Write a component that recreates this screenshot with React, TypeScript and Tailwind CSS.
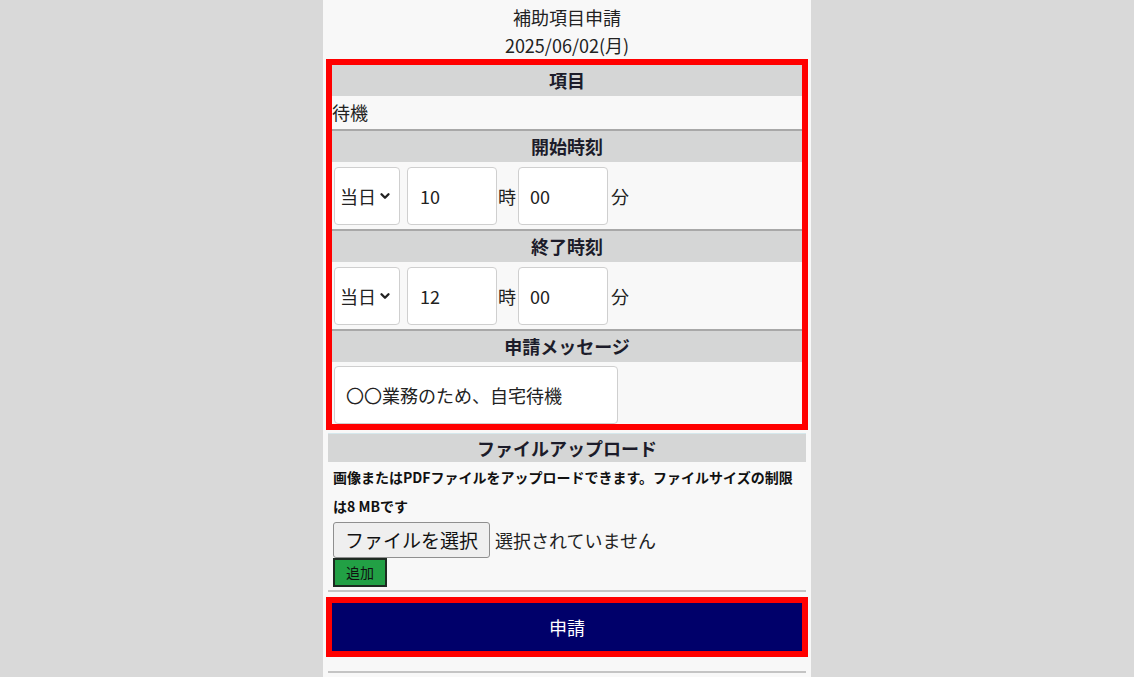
import { ChevronDown } from "lucide-react"

const font = { fontFamily: '"Noto Sans CJK JP", "Noto Sans", sans-serif' }

function SectionHeader({ label }: { label: string }) {
  return (
    <div className="h-[33px] bg-[#d5d6d6] border-t-2 border-[#a8a8a8] flex items-center justify-center text-[18px] font-bold text-[#1c1c2a]">
      {label}
    </div>
  )
}

function TimeRow({ hour, minute }: { hour: string; minute: string }) {
  return (
    <div className="flex items-center h-[67px] pl-[2px] pt-[1px] text-[18px] text-[#222]">
      <div className="w-[66px] h-[58px] border border-[#cfcfcf] rounded-[4px] bg-white flex items-center pl-[5px] gap-[2px]">
        <span>当日</span>
        <ChevronDown className="w-[14px] h-[14px]" strokeWidth={4} />
      </div>
      <div className="ml-[7px] w-[90px] h-[58px] border border-[#cfcfcf] rounded-[4px] bg-white flex items-center pl-[12px]">
        {hour}
      </div>
      <span className="ml-[1px] w-[20px]">時</span>
      <div className="w-[90px] h-[58px] border border-[#cfcfcf] rounded-[4px] bg-white flex items-center pl-[11px]">
        {minute}
      </div>
      <span className="ml-[3px]">分</span>
    </div>
  )
}

export default function App() {
  return (
    <div className="min-h-[677px] bg-[#d9d9d9]" style={font}>
      <div className="mx-auto w-[488px] min-h-[677px] bg-[#f8f8f8] px-[3px] pt-[3px]">
        <div className="text-center text-[18px] leading-[28px] text-[#222]">
          <div>補助項目申請</div>
          <div>2025/06/02(月)</div>
        </div>

        <div className="border-[6px] border-[#ff0000] bg-[#f8f8f8]">
          <div className="h-[31px] bg-[#d5d6d6] flex items-center justify-center text-[18px] font-bold text-[#1c1c2a]">
            項目
          </div>
          <div className="h-[33px] flex items-center text-[18px] text-[#222]">待機</div>

          <SectionHeader label="開始時刻" />
          <TimeRow hour="10" minute="00" />

          <SectionHeader label="終了時刻" />
          <TimeRow hour="12" minute="00" />

          <SectionHeader label="申請メッセージ" />
          <div className="pl-[2px] pt-[4px] pb-[0px]">
            <div className="w-[284px] h-[58px] border border-[#cfcfcf] rounded-[4px] bg-white flex items-center pl-[11px] text-[18px] text-[#222]">
              〇〇業務のため、自宅待機
            </div>
          </div>
        </div>

        <div className="mx-[2px] mt-[3px]">
          <div className="h-[29px] bg-[#d5d6d6] border-t border-[#d6e8ec] flex items-center justify-center text-[18px] font-bold text-[#1c1c2a]">
            ファイルアップロード
          </div>
          <p className="px-[5px] pt-[1px] text-[14px] font-bold leading-[29px] text-[#111]">
            画像またはPDFファイルをアップロードできます。ファイルサイズの制限は8 MBです
          </p>
          <div className="flex items-center px-[5px] mt-[1px]">
            <div className="h-[36px] px-[11px] bg-[#efefef] border border-[#8f8f8f] rounded-[3px] flex items-center text-[19px] text-[#111]">
              ファイルを選択
            </div>
            <span className="ml-[5px] text-[18px] text-[#222]">選択されていません</span>
          </div>
          <div className="px-[5px]">
            <div className="w-[54px] h-[29px] bg-[#22a045] border-2 border-[#1e2a22] flex items-center justify-center text-[14px] text-[#111]">
              追加
            </div>
          </div>
          <div className="mt-[3px] h-[2px] bg-[#c4c4c4]" />
        </div>

        <div className="mt-[5px] border-[6px] border-[#ff0000]">
          <div className="h-[48px] bg-[#00006a] flex items-center justify-center text-[18px] text-white">
            申請
          </div>
        </div>

        <div className="mx-[2px] mt-[14px] h-[2px] bg-[#c4c4c4]" />
      </div>
    </div>
  )
}
